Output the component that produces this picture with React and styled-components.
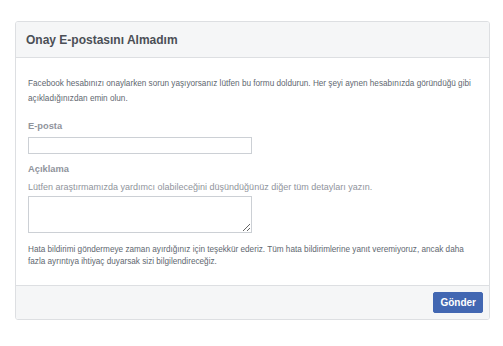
import React from "react";
import styled, { createGlobalStyle } from "styled-components";

const GlobalStyle = createGlobalStyle`
  body {
    margin: 0;
    background: #ffffff;
    font-family: "Liberation Sans", Arial, sans-serif;
  }
`;

function App() {
  return (
    <>
      <GlobalStyle />
      <Page>
        <Card>
          <Header>
            <Title>Onay E-postasını Almadım</Title>
          </Header>
          <Body>
            <Intro>
              Facebook hesabınızı onaylarken sorun yaşıyorsanız lütfen bu
              formu doldurun. Her şeyi aynen hesabınızda göründüğü gibi
              açıkladığınızdan emin olun.
            </Intro>
            <Field>
              <Label htmlFor="email">E-posta</Label>
              <TextInput id="email" type="text" />
            </Field>
            <Field>
              <Label htmlFor="desc">Açıklama</Label>
              <Hint>
                Lütfen araştırmamızda yardımcı olabileceğini düşündüğünüz diğer
                tüm detayları yazın.
              </Hint>
              <TextArea id="desc" />
            </Field>
            <Note>
              Hata bildirimi göndermeye zaman ayırdığınız için teşekkür ederiz.
              Tüm hata bildirimlerine yanıt veremiyoruz, ancak daha fazla
              ayrıntıya ihtiyaç duyarsak sizi bilgilendireceğiz.
            </Note>
          </Body>
          <Footer>
            <SubmitButton type="button">Gönder</SubmitButton>
          </Footer>
        </Card>
      </Page>
    </>
  );
}

const Page = styled.div`
  padding: 21px 13px 0 15px;
`;

const Card = styled.div`
  width: 475px;
  box-sizing: border-box;
  border: 1px solid #dddfe2;
  border-radius: 3px;
  background: #fff;
  overflow: hidden;
`;

const Header = styled.div`
  height: 36px;
  box-sizing: border-box;
  display: flex;
  align-items: center;
  padding: 0 10px;
  background: #f5f6f7;
  border-bottom: 1px solid #dddfe2;
`;

const Title = styled.h2`
  margin: 0;
  font-size: 12px;
  font-weight: bold;
  color: #4b4f56;
`;

const Body = styled.div`
  padding: 18px 10px 17px 12px;
  display: flex;
  flex-direction: column;
`;

const Intro = styled.p`
  margin: 0 0 13px;
  font-size: 8.2px;
  line-height: 15px;
  color: #616770;
`;

const Field = styled.div`
  display: flex;
  flex-direction: column;
  align-items: flex-start;
  margin-bottom: 8px;
`;

const Label = styled.label`
  font-size: 9.3px;
  font-weight: bold;
  line-height: 14px;
  color: #90949c;
  margin-bottom: 4px;
`;

const Hint = styled.div`
  font-size: 9px;
  line-height: 14px;
  color: #90949c;
  margin-bottom: 2px;
`;

const TextInput = styled.input`
  width: 224px;
  height: 17px;
  box-sizing: border-box;
  border: 1px solid #ccd0d5;
  padding: 0 3px;
  margin: 0;
  font: inherit;
`;

const TextArea = styled.textarea`
  width: 224px;
  height: 37px;
  box-sizing: border-box;
  border: 1px solid #ccd0d5;
  padding: 3px;
  margin: 0;
  font: inherit;
`;

const Note = styled.p`
  margin: 3px 0 0;
  font-size: 8.2px;
  line-height: 12px;
  color: #616770;
`;

const Footer = styled.div`
  display: flex;
  justify-content: flex-end;
  padding: 6px 6px;
  background: #f5f6f7;
  border-top: 1px solid #dddfe2;
`;

const SubmitButton = styled.button`
  height: 21px;
  padding: 0 6px;
  border: 1px solid #4267b2;
  border-radius: 2px;
  background: #4267b2;
  color: #fff;
  font-family: "Liberation Sans", Arial, sans-serif;
  font-size: 10px;
  font-weight: bold;
  cursor: pointer;
`;

export default App;
